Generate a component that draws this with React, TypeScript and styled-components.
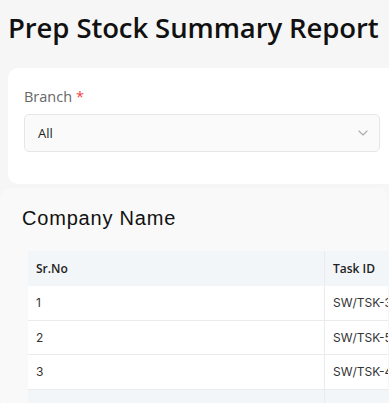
import React from "react";
import styled, { createGlobalStyle } from "styled-components";

const Global = createGlobalStyle`
  html, body { margin: 0; padding: 0; background: #f6f6f6; overflow: hidden; }
  body { font-family: "Open Sans", sans-serif; }
`;

const Page = styled.div`
  width: 389px;
  height: 403px;
  overflow: hidden;
  box-sizing: border-box;
`;

const Title = styled.h1`
  margin: 0;
  padding: 10px 0 0 8px;
  font-family: "Open Sans", sans-serif;
  font-weight: 600;
  font-size: 27.5px;
  line-height: 36px;
  letter-spacing: -0.1px;
  color: #111;
  white-space: nowrap;
`;

const FilterCard = styled.div`
  margin: 22px -20px 0 8px;
  background: #fff;
  border-radius: 10px;
  padding: 19px 28px 31px 16px;
  height: 116px;
  box-sizing: border-box;
`;

const Label = styled.div`
  font-family: "Open Sans", sans-serif;
  font-size: 14.5px;
  line-height: 20px;
  color: #666;
  margin-bottom: 7px;
`;

const Required = styled.span`
  color: #ef4444;
  margin-left: 4px;
`;

const Select = styled.div`
  width: 356px;
  height: 38px;
  box-sizing: border-box;
  border: 1px solid #e6e6e6;
  border-radius: 5px;
  background: #fafafa;
  display: flex;
  align-items: center;
  justify-content: space-between;
  padding: 0 11px 0 13px;
  font-family: "Open Sans", sans-serif;
  font-size: 13px;
  color: #222;
`;

const Section = styled.div`
  margin: 4px 1px 0 0;
  background: #f9f9f9;
  border-radius: 10px;
  padding: 18px 0 0 22px;
  height: 219px;
  box-sizing: border-box;
  overflow: hidden;
`;

const CompanyName = styled.div`
  font-family: "Liberation Sans", Arial, sans-serif;
  font-size: 20px;
  line-height: 24px;
  letter-spacing: 0.8px;
  color: #111;
  margin-bottom: 21px;
`;

const Table = styled.div`
  margin-left: 6px;
  display: grid;
  grid-template-columns: 297px 80px;
`;

const Cell = styled.div<{ $head?: boolean; $last?: boolean }>`
  height: ${(p) => (p.$head ? "35px" : "34.5px")};
  box-sizing: border-box;
  display: flex;
  align-items: center;
  padding-left: 8px;
  background: ${(p) => (p.$head ? "#f3f6f9" : "#fff")};
  border-bottom: 1px solid ${(p) => (p.$head ? "transparent" : "#ebebeb")};
  border-right: ${(p) => (p.$last ? "none" : "1px solid #ebebeb")};
  font-family: ${(p) => (p.$head ? `"Open Sans", sans-serif` : `"Inter", sans-serif`)};
  font-weight: ${(p) => (p.$head ? 600 : 400)};
  font-size: 12px;
  color: ${(p) => (p.$head ? "#222" : "#333")};
  white-space: nowrap;
  overflow: hidden;
`;

const Chevron = () => (
  <svg width="10" height="6" viewBox="0 0 10 6" fill="none">
    <path d="M1 1l4 4 4-4" stroke="#aaa" strokeWidth="1.1" strokeLinecap="round" strokeLinejoin="round" />
  </svg>
);

const rows = [
  { n: "1", id: "SW/TSK-3" },
  { n: "2", id: "SW/TSK-5" },
  { n: "3", id: "SW/TSK-4" },
];

export default function App() {
  return (
    <Page>
      <Global />
      <Title>Prep Stock Summary Report</Title>
      <FilterCard>
        <Label>
          Branch<Required>*</Required>
        </Label>
        <Select>
          <span>All</span>
          <Chevron />
        </Select>
      </FilterCard>
      <Section>
        <CompanyName>Company Name</CompanyName>
        <Table>
          <Cell $head>Sr.No</Cell>
          <Cell $head $last>Task ID</Cell>
          {rows.map((r) => (
            <React.Fragment key={r.n}>
              <Cell>{r.n}</Cell>
              <Cell $last>{r.id}</Cell>
            </React.Fragment>
          ))}
          <Cell $head />
          <Cell $head $last />
        </Table>
      </Section>
    </Page>
  );
}
